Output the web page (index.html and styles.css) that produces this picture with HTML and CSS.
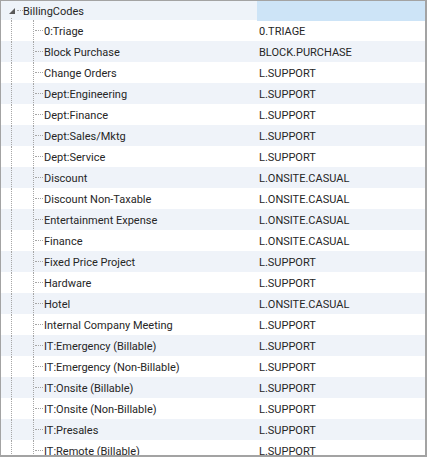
FILE: index.html
```html
<!DOCTYPE html>
<html>
<head>
<meta charset="utf-8">
<link rel="stylesheet" href="styles.css">
</head>
<body>
<div class="tree">
  <div class="head">
    <div class="head-name">
      <span class="expander"><svg width="6" height="6" viewBox="0 0 6 6"><polygon points="6,0 6,6 0,6" fill="#595959"/></svg></span>
      <span class="head-hline"></span>
      <span class="head-vline"></span>
      <span class="label">BillingCodes</span>
    </div>
    <div class="head-value"></div>
  </div>
  <div class="rows">
    <div class="row"><div class="name"><span class="l1"></span><span class="l2"></span><span class="hl"></span><span class="label">0:Triage</span></div><div class="value">0.TRIAGE</div></div>
    <div class="row"><div class="name"><span class="l1"></span><span class="l2"></span><span class="hl"></span><span class="label">Block Purchase</span></div><div class="value">BLOCK.PURCHASE</div></div>
    <div class="row"><div class="name"><span class="l1"></span><span class="l2"></span><span class="hl"></span><span class="label">Change Orders</span></div><div class="value">L.SUPPORT</div></div>
    <div class="row"><div class="name"><span class="l1"></span><span class="l2"></span><span class="hl"></span><span class="label">Dept:Engineering</span></div><div class="value">L.SUPPORT</div></div>
    <div class="row"><div class="name"><span class="l1"></span><span class="l2"></span><span class="hl"></span><span class="label">Dept:Finance</span></div><div class="value">L.SUPPORT</div></div>
    <div class="row"><div class="name"><span class="l1"></span><span class="l2"></span><span class="hl"></span><span class="label">Dept:Sales/Mktg</span></div><div class="value">L.SUPPORT</div></div>
    <div class="row"><div class="name"><span class="l1"></span><span class="l2"></span><span class="hl"></span><span class="label">Dept:Service</span></div><div class="value">L.SUPPORT</div></div>
    <div class="row"><div class="name"><span class="l1"></span><span class="l2"></span><span class="hl"></span><span class="label">Discount</span></div><div class="value">L.ONSITE.CASUAL</div></div>
    <div class="row"><div class="name"><span class="l1"></span><span class="l2"></span><span class="hl"></span><span class="label">Discount Non-Taxable</span></div><div class="value">L.ONSITE.CASUAL</div></div>
    <div class="row"><div class="name"><span class="l1"></span><span class="l2"></span><span class="hl"></span><span class="label">Entertainment Expense</span></div><div class="value">L.ONSITE.CASUAL</div></div>
    <div class="row"><div class="name"><span class="l1"></span><span class="l2"></span><span class="hl"></span><span class="label">Finance</span></div><div class="value">L.ONSITE.CASUAL</div></div>
    <div class="row"><div class="name"><span class="l1"></span><span class="l2"></span><span class="hl"></span><span class="label">Fixed Price Project</span></div><div class="value">L.SUPPORT</div></div>
    <div class="row"><div class="name"><span class="l1"></span><span class="l2"></span><span class="hl"></span><span class="label">Hardware</span></div><div class="value">L.SUPPORT</div></div>
    <div class="row"><div class="name"><span class="l1"></span><span class="l2"></span><span class="hl"></span><span class="label">Hotel</span></div><div class="value">L.ONSITE.CASUAL</div></div>
    <div class="row"><div class="name"><span class="l1"></span><span class="l2"></span><span class="hl"></span><span class="label">Internal Company Meeting</span></div><div class="value">L.SUPPORT</div></div>
    <div class="row"><div class="name"><span class="l1"></span><span class="l2"></span><span class="hl"></span><span class="label">IT:Emergency (Billable)</span></div><div class="value">L.SUPPORT</div></div>
    <div class="row"><div class="name"><span class="l1"></span><span class="l2"></span><span class="hl"></span><span class="label">IT:Emergency (Non-Billable)</span></div><div class="value">L.SUPPORT</div></div>
    <div class="row"><div class="name"><span class="l1"></span><span class="l2"></span><span class="hl"></span><span class="label">IT:Onsite (Billable)</span></div><div class="value">L.SUPPORT</div></div>
    <div class="row"><div class="name"><span class="l1"></span><span class="l2"></span><span class="hl"></span><span class="label">IT:Onsite (Non-Billable)</span></div><div class="value">L.SUPPORT</div></div>
    <div class="row"><div class="name"><span class="l1"></span><span class="l2"></span><span class="hl"></span><span class="label">IT:Presales</span></div><div class="value">L.SUPPORT</div></div>
    <div class="row"><div class="name"><span class="l1"></span><span class="l2"></span><span class="hl"></span><span class="label">IT:Remote (Billable)</span></div><div class="value">L.SUPPORT</div></div>
  </div>
</div>
</body>
</html>
```
FILE: styles.css
```css
html, body {
  margin: 0;
  padding: 0;
  background: #ffffff;
}
.tree {
  box-sizing: border-box;
  width: 427px;
  height: 457px;
  border-style: solid;
  border-color: #a3a3a3;
  border-width: 1px 2px 2px 1px;
  overflow: hidden;
  font-family: Roboto, "Liberation Sans", sans-serif;
  font-size: 11px;
  color: #262626;
}
.head {
  display: grid;
  grid-template-columns: 256px 1fr;
  height: 19px;
  background: #eef3f9;
}
.head-name {
  position: relative;
}
.expander {
  position: absolute;
  left: 8px;
  top: 7px;
  width: 6px;
  height: 6px;
  display: block;
}
.expander svg { display: block; }
.head-hline {
  position: absolute;
  left: 16px;
  top: 9px;
  width: 6px;
  border-top: 1px dotted #a6a6a6;
}
.head-vline {
  position: absolute;
  left: 10px;
  top: 17px;
  bottom: 0;
  border-left: 1px dotted #a6a6a6;
}
.head-name .label {
  display: block;
  padding-left: 22px;
  padding-top: 1px;
  line-height: 19px;
}
.head-value {
  background: #cde4f7;
}
.row {
  display: grid;
  grid-template-columns: 256px 1fr;
  height: 21px;
  line-height: 21px;
}
.row:nth-child(even) {
  background: #eff3f9;
}
.name {
  position: relative;
  padding-left: 43px;
  padding-top: 1px;
  white-space: nowrap;
}
.l1, .l2 {
  position: absolute;
  top: 0;
  bottom: 0;
  border-left: 1px dotted #a6a6a6;
}
.l1 { left: 10px; }
.l2 { left: 32px; }
.hl {
  position: absolute;
  left: 34px;
  top: 10px;
  width: 8px;
  border-top: 1px dotted #a6a6a6;
}
.value {
  padding-left: 2px;
  padding-top: 1px;
  white-space: nowrap;
}
```
